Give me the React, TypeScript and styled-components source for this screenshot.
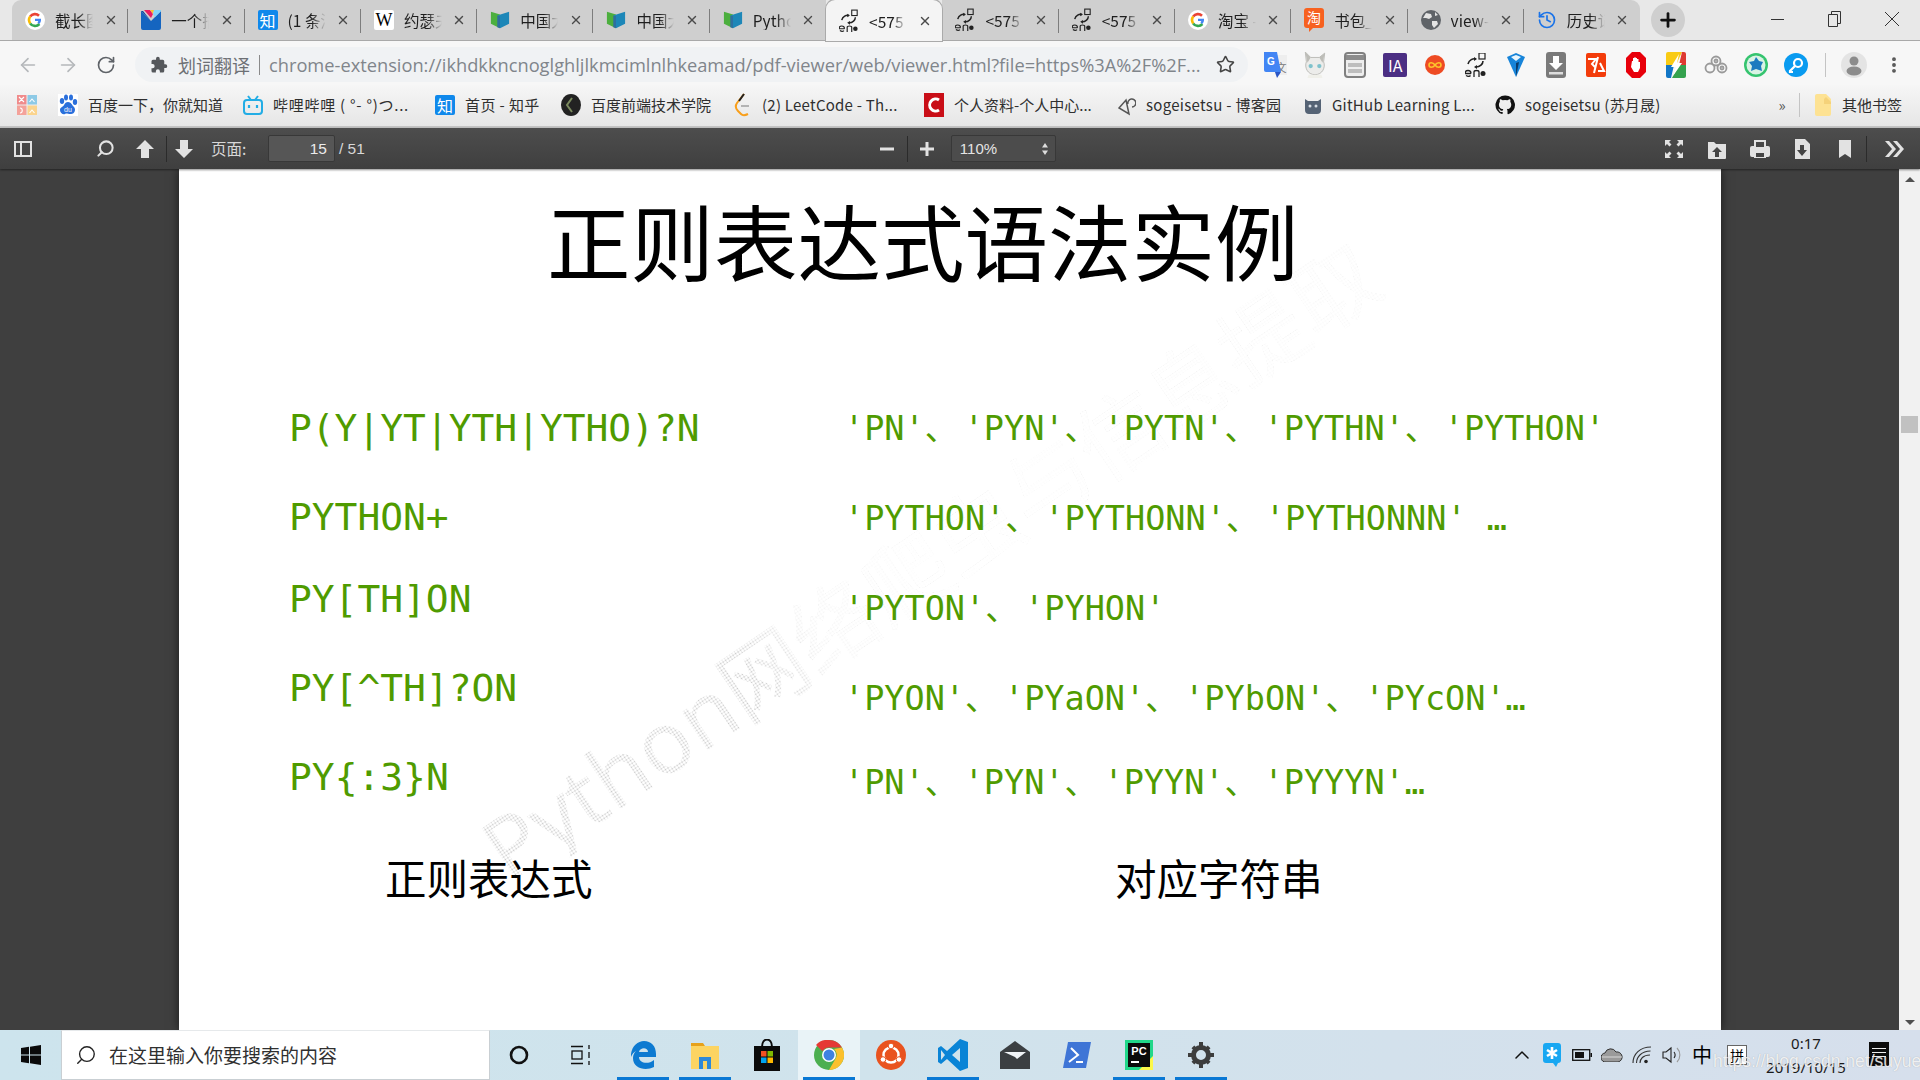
import React from "react";
import styled, { createGlobalStyle } from "styled-components";
import { ArrowLeft, ArrowRight, RotateCw, Star, X, Plus, History, Search, ChevronUp, MoreVertical } from "lucide-react";

const Global = createGlobalStyle`
  html, body { margin: 0; padding: 0; width: 1920px; height: 1080px; overflow: hidden; }
  body { font-family: "Noto Sans CJK SC", "Noto Sans", sans-serif; }
  * { box-sizing: border-box; }
`;

const Root = styled.div`
  width: 1920px; height: 1080px; display: flex; flex-direction: column; overflow: hidden; background: #404040;
`;

/* ---------- tab strip ---------- */
const TabStrip = styled.div`
  height: 41px; flex: none; display: flex; align-items: stretch; padding-left: 12px;
  background: #e8e8e8; border-bottom: 1px solid #a9a9a9;
`;
const Tab = styled.div<{ $active?: boolean; $last?: boolean }>`
  width: 116.3px; flex: none; display: flex; align-items: center; padding: 0 0 0 13px; position: relative;
  height: ${p => (p.$active ? "41px" : "40px")};
  background: ${p => (p.$active ? "#f4f4f4" : "#cfcfcf")};
  border-radius: ${p => (p.$active ? "9px 9px 0 0" : "0")};
  box-shadow: ${p => (p.$active ? "0 0 0 1px #aaa" : "none")};
  z-index: ${p => (p.$active ? 2 : 1)};
  &:first-child { border-top-left-radius: 9px; }
  ${p => p.$last && "border-top-right-radius: 9px;"}
  &::after {
    content: ""; position: absolute; right: 0; top: 9px; bottom: 7px; width: 1px;
    background: ${p => (p.$active || p.$last ? "transparent" : "#7d7d7d")};
  }
`;
const TabIconSlot = styled.span`
  width: 20px; height: 20px; flex: none; display: flex; align-items: center; justify-content: center;
`;
const TabTitle = styled.span`
  margin-left: 10px; width: 38px; flex: none; overflow: hidden; white-space: nowrap; font-size: 15.5px; line-height: 20px; color: #1e1e1e;
  -webkit-mask-image: linear-gradient(90deg, #000 62%, transparent 100%);
  mask-image: linear-gradient(90deg, #000 62%, transparent 100%);
`;
const TabClose = styled.span`
  margin-left: 10.5px; display: flex; color: #4a4a4a;
`;
const NewTab = styled.span`
  width: 34px; height: 34px; border-radius: 50%; background: #cfcfcf; margin: 3px 0 0 11px;
  display: flex; align-items: center; justify-content: center; color: #111;
`;
const WindowControls = styled.div`
  margin-left: auto; display: flex; color: #333; height: 38px;
`;
const WinButton = styled.span`
  width: 57px; display: flex; align-items: center; justify-content: center;
`;

/* ---------- address toolbar ---------- */
const Toolbar = styled.div`
  height: 44px; flex: none; display: flex; align-items: center; background: #f7f7f7; padding-top: 3px;
`;
const NavSlot = styled.span<{ $w: number; $c?: string }>`
  width: ${p => p.$w}px; flex: none; display: flex; justify-content: center; align-items: center; color: ${p => p.$c || "#5f6368"};
`;
const Omnibox = styled.div`
  width: 1113px; height: 35px; margin-left: 3px; border-radius: 18px; background: #f0f2f4; display: flex; align-items: center; padding-left: 15px; flex: none;
`;
const OmniLabel = styled.span`
  margin-left: 10px; font-size: 18px; color: #6d7074; white-space: nowrap;
`;
const OmniDivider = styled.span`
  width: 1px; height: 20px; background: #8a8a8a; margin: 0 9px 0 9px;
`;
const OmniUrl = styled.span`
  font-family: "Open Sans", "Noto Sans", sans-serif; font-size: 18.25px; color: #80858b; white-space: nowrap;
`;
const OmniStar = styled.span`
  margin-left: auto; margin-right: 13px; display: flex; color: #444;
`;
const Extensions = styled.div`
  display: flex; align-items: center; margin-left: 7px;
`;
const ExtSlot = styled.span`
  width: 40.1px; height: 30px; flex: none; display: flex; align-items: center; justify-content: center;
`;
const ExtDivider = styled.span`
  width: 1px; height: 24px; flex: none; background: #c4c4c4; margin-left: 9px;
`;
const VSep = styled.span<{ $h?: number; $c?: string }>`
  width: 1px; height: ${p => p.$h || 22}px; flex: none; background: ${p => p.$c || "#c4c4c4"};
`;

/* ---------- bookmarks ---------- */
const Bookmarks = styled.div`
  height: 43px; flex: none; display: flex; align-items: center; padding: 0 0 1px 17px;
  background: linear-gradient(#f6f6f6, #e6e6e6); border-bottom: 2px solid #c3c3c3;
`;
const Bookmark = styled.div<{ $w: number }>`
  width: ${p => p.$w}px; flex: none; display: flex; align-items: center; gap: 10px; white-space: nowrap; overflow: hidden;
`;
const BookmarkText = styled.span<{ $ls?: number }>`
  font-size: 15px; color: #2f2f2f; line-height: 22px; white-space: nowrap; letter-spacing: ${p => p.$ls || 0}px;
`;
const MoreMarks = styled.span`
  margin-left: auto; margin-right: 7px; width: 20px; text-align: center; font-size: 15px; color: #555; line-height: 18px;
`;
const OtherMarks = styled.div`
  display: flex; align-items: center; gap: 11px; margin: 0 18px 0 15px;
`;

/* ---------- pdf toolbar ---------- */
const PdfBar = styled.div`
  height: 41px; flex: none; display: flex; align-items: center; color: #dcdcdc;
  background: linear-gradient(#4d4d4d, #3f3f3f); box-shadow: 0 1px 2px rgba(0,0,0,.45); position: relative; z-index: 3;
`;
const PdfSlot = styled.span<{ $w: number; $ml?: number }>`
  width: ${p => p.$w}px; margin-left: ${p => p.$ml || 0}px; height: 32px; flex: none; display: flex; align-items: center; justify-content: center;
`;
const PdfLabel = styled.span`
  font-size: 15.5px; margin-left: 10px; width: 57px; white-space: nowrap; color: #d8d8d8; padding-bottom: 1px;
`;
const PageInput = styled.span`
  width: 67px; height: 27px; flex: none; border-radius: 2px; background: #565656; border: 1px solid #383838; display: flex; align-items: center; justify-content: flex-end;
  padding-right: 7px; font-family: "Liberation Sans", sans-serif; font-size: 15.5px; color: #ececec;
`;
const PageCount = styled.span`
  margin-left: 4px; font-family: "Liberation Sans", sans-serif; font-size: 15.5px; color: #d8d8d8; white-space: nowrap;
`;
const ZoomSelect = styled.span`
  width: 105px; height: 27px; margin-left: 4px; flex: none; border-radius: 2px; background: #4c4c4c; border: 1px solid #383838; display: flex; align-items: center;
  justify-content: space-between; padding: 0 6px 0 8px; font-family: "Liberation Sans", sans-serif; font-size: 15px; color: #e4e4e4;
`;
const PdfRight = styled.div`
  margin-left: auto; display: flex; align-items: center;
`;

/* ---------- viewer ---------- */
const Viewer = styled.div`
  flex: 1; min-height: 0; display: flex; background: #3f3f3f; overflow: hidden;
`;
const Page = styled.div`
  width: 1542px; margin-left: 179px; flex: none; height: 100%; background: #fff; position: relative; overflow: hidden; padding-top: 28px;
  box-shadow: 0 0 10px rgba(0,0,0,.6);
`;
const Watermark = styled.div`
  position: absolute; left: 337px; top: 635px; transform-origin: left bottom; transform: rotate(-34deg); white-space: nowrap; font-family: "Noto Sans", "Noto Sans CJK SC", sans-serif;
  font-size: 86px; line-height: 90px; color: transparent;
  background-image:
    linear-gradient(90deg, rgba(255,255,255,0) 0%, rgba(255,255,255,0) 30%, rgba(255,255,255,.8) 37%, rgba(255,255,255,.97) 50%, rgba(255,255,255,.88) 100%),
    radial-gradient(circle, #c9c9c9 .8px, transparent 1.1px);
  background-size: 100% 100%, 3px 3px;
  -webkit-background-clip: text; background-clip: text;
`;
const SlideTitle = styled.h1`
  margin: 0 0 0 368px; font-size: 83.5px; line-height: 83px; font-weight: 400; color: #000; white-space: nowrap; position: relative;
`;
const Columns = styled.div`
  display: flex; padding: 126px 0 0 110px; position: relative;
`;
const LeftCol = styled.div`
  width: 555px; flex: none; display: flex; flex-direction: column;
`;
const RightCol = styled.div`
  flex: 1; display: flex; flex-direction: column; padding-top: 1px;
`;
const Row = styled.div<{ $h: number; $mt?: number }>`
  height: ${p => p.$h}px; margin-top: ${p => p.$mt || 0}px; display: flex; align-items: center; white-space: pre;
`;
const Regex = styled.span`
  font-family: "DejaVu Sans Mono", monospace; font-size: 37.9px; line-height: 44px; color: #4f9b00;
`;
const Sample = styled.span`
  font-family: "DejaVu Sans Mono", monospace; font-size: 33.5px; line-height: 40px; color: #4f9b00;
`;
const Comma = styled.span`
  display: inline-block; width: 39px; font-size: 33px; font-family: "Noto Sans CJK SC", sans-serif;
`;
const Captions = styled.div`
  display: flex; position: relative; padding: 48px 0 0 206px;
`;
const Caption = styled.span<{ $w?: number }>`
  font-size: 41.5px; line-height: 56px; color: #000; white-space: nowrap; width: ${p => (p.$w ? p.$w + "px" : "auto")};
`;
const Scrollbar = styled.div`
  width: 21px; margin-left: 178px; flex: none; background: #f1f1f1; display: flex; flex-direction: column; align-items: center; padding-top: 8px; position: relative;
`;
const ScrollArrow = styled.span<{ $down?: boolean }>`
  width: 0; height: 0; border-left: 5px solid transparent; border-right: 5px solid transparent;
  ${p => (p.$down ? "border-top: 5px solid #505050; margin-top: auto; margin-bottom: 5px;" : "border-bottom: 5px solid #505050;")}
`;
const ScrollThumb = styled.span`
  width: 17px; height: 17px; background: #c1c1c1; margin-top: 234px;
`;

/* ---------- taskbar ---------- */
const Taskbar = styled.div`
  height: 50px; flex: none; display: flex; align-items: stretch; background: linear-gradient(90deg, #cde4ed 0%, #d0e3ec 45%, #d6dfec 100%); position: relative;
`;
const StartBtn = styled.span`
  width: 61px; flex: none; display: flex; align-items: center; justify-content: center;
`;
const SearchBox = styled.div`
  width: 429px; flex: none; background: #fff; border: 1px solid #c9cfd3; border-top-color: #e6e9eb; display: flex; align-items: center; padding: 0 0 1px 13px;
`;
const SearchText = styled.span`
  margin-left: 12px; font-size: 19px; color: #303030; white-space: nowrap;
`;
const TaskItems = styled.div`
  display: flex; margin-left: -2px;
`;
const TaskItem = styled.span<{ $on?: boolean; $open?: boolean }>`
  width: 62px; flex: none; display: flex; align-items: center; justify-content: center; position: relative; padding-bottom: 1px;
  background: ${p => (p.$on ? "#e9f3f7" : "transparent")};
  &::after {
    content: ""; position: absolute; left: 5px; right: 5px; bottom: 0; height: 3px; background: ${p => (p.$open ? "#0a78d4" : "transparent")};
  }
`;
const Tray = styled.div`
  margin-left: auto; display: flex; align-items: center; padding-right: 21px; height: 100%;
`;
const TraySlot = styled.span<{ $w: number }>`
  width: ${p => p.$w}px; flex: none; display: flex; align-items: center; justify-content: center; color: #111;
`;
const ImeZh = styled.span`
  font-size: 20px; color: #000; line-height: 24px;
`;
const ImeBox = styled.span`
  width: 20px; height: 20px; background: #fff; border: 1px solid #666; font-size: 14px; line-height: 18px; text-align: center; color: #000;
`;
const Clock = styled.div`
  width: 98px; flex: none; display: flex; flex-direction: column; align-items: center; font-family: "Noto Sans", sans-serif; font-size: 15px; line-height: 24px; color: #1a1a1a;
`;
const Notice = styled.span`
  width: 20px; height: 24px; background: #0c0c0c; display: flex; flex-direction: column; gap: 3px; padding: 6px 3px 0; margin-bottom: 2px;
`;
const NoticeLine = styled.i`
  display: block; height: 1px; background: #eee;
`;
const NoticeWrap = styled.span`
  width: 41px; margin-left: 3px; flex: none; display: flex; justify-content: center;
`;
const Stamp = styled.span`
  position: absolute; left: 1713px; top: 19px; font-family: "Liberation Sans", sans-serif; font-size: 17.5px; line-height: 24px; color: rgba(255,255,255,.82); white-space: nowrap;
  text-shadow: 0 0 1px rgba(120,120,120,.55);
`;

/* ---------- small badges ---------- */
const Badge = styled.span<{ $bg: string; $s?: number; $fs?: number; $fg?: string; $serif?: boolean }>`
  width: ${p => p.$s || 20}px; height: ${p => p.$s || 20}px; background: ${p => p.$bg}; border-radius: 2px; color: ${p => p.$fg || "#fff"};
  font-size: ${p => p.$fs || 16}px; line-height: ${p => p.$s || 20}px; text-align: center; flex: none; display: block;
  font-family: ${p => (p.$serif ? '"Liberation Serif", serif' : 'inherit')};
`;

/* ---------- icons ---------- */
const GoogleIcon = () => (
  <svg width="20" height="20" viewBox="0 0 20 20">
    <circle cx="10" cy="10" r="10" fill="#fff" />
    <path d="M5.2 6.6A5.9 5.9 0 0 1 14 5.7" fill="none" stroke="#ea4335" strokeWidth="2.6" />
    <path d="M5.2 6.6a5.9 5.9 0 0 0 0 6.8" fill="none" stroke="#fbbc05" strokeWidth="2.6" />
    <path d="M5.2 13.4a5.9 5.9 0 0 0 9.2.6" fill="none" stroke="#34a853" strokeWidth="2.6" />
    <path d="M10 8.8h6v1.4a6 6 0 0 1-1.6 3.9l-2-1.5a3 3 0 0 0 .9-1.6H10z" fill="#4285f4" />
  </svg>
);
const ShieldIcon = () => (
  <svg width="20" height="20" viewBox="0 0 20 20">
    <path d="M0 1l10 10L20 1v17a2 2 0 0 1-2 2H2a2 2 0 0 1-2-2z" fill="#1565c0" />
    <path d="M0 1h2l8 10z" fill="#0d47a1" />
    <path d="M3 0h6l3 4-2 4z" fill="#e91e63" />
    <path d="M9 0h4l-1 4z" fill="#fbc02d" />
    <path d="M13 0h7v1l-6 6-2-3z" fill="#81d4fa" />
  </svg>
);
const MoocIcon = () => (
  <svg width="22" height="22" viewBox="0 0 22 22">
    <path d="M1 2l10 3v15L1 15z" fill="#4caf3e" />
    <path d="M8 6l13-4v13l-10 5V7z" fill="#1d87b8" />
    <path d="M8 6l3 1v13l-3-1z" fill="#2f6f9f" />
  </svg>
);
const EnIcon = () => (
  <svg width="22" height="24" viewBox="0 0 22 24">
    <path d="M3 11c1-4 5-6 8-5" fill="none" stroke="#222" strokeWidth="1.6" />
    <path d="M9 4l3 2-3 2z" fill="#222" />
    <path d="M18 8c0 3-3 6-7 6" fill="none" stroke="#222" strokeWidth="1.6" />
    <path d="M12 12l-3 2 3 2z" fill="#222" />
    <rect x="14" y="0" width="6" height="6" fill="none" stroke="#222" strokeWidth="1.2" />
    <path d="M0 20.5h6M0 20.5c0-4 6-4 6 0M1 22.5c1.5 1 3.500 1 4.500 0M9 24v-5c0-2 5-2 5 0v5" fill="none" stroke="#222" strokeWidth="1.3" />
    <circle cx="18" cy="20.500" r="2.500" fill="#222" />
  </svg>
);
const TaoIcon = () => (
  <svg width="20" height="24" viewBox="0 0 20 24">
    <path d="M3 0h14a3 3 0 0 1 3 3v14a3 3 0 0 1-3 3H9l-4 4v-4H3a3 3 0 0 1-3-3V3a3 3 0 0 1 3-3z" fill="#f7611f" />
    <text x="10" y="15" textAnchor="middle" fontSize="14" fill="#fff" fontFamily="Noto Sans CJK SC">淘</text>
  </svg>
);
const GlobeIcon = () => (
  <svg width="20" height="20" viewBox="0 0 20 20">
    <circle cx="10" cy="10" r="10" fill="#5f6368" />
    <path d="M5 3l5 1 1 3-3 2-3-1-3 0zM11 11l5 0 1 3-4 4-2-3zM14 2l3 3-3 1z" fill="#e4e4e4" />
  </svg>
);
const TranslateIcon = () => (
  <svg width="30" height="32" viewBox="0 0 30 32">
    <path d="M12 6h15v20H15z" fill="#eee" />
    <text x="21" y="23" textAnchor="middle" fontSize="11" fill="#777" fontFamily="Noto Sans CJK SC">文</text>
    <path d="M4 3h13l4 20H6a2 2 0 0 1-2-2z" fill="#4285f4" />
    <path d="M15 23l2 6 4-6z" fill="#2a56c6" />
    <text x="11" y="16" textAnchor="middle" fontSize="10" fontWeight="700" fill="#fff" fontFamily="Liberation Sans">G</text>
  </svg>
);
const CatIcon = () => (
  <svg width="24" height="28" viewBox="0 0 22 26">
    <path d="M2 1l5 5h8l5-4-1 8c2 5-1 12-8 12S1 15 3 10z" fill="#ececea" stroke="#b5b5b0" strokeWidth=".8" />
    <path d="M5 22l-1 3h14l-1-3z" fill="#f0f0ea" />
    <path d="M2 1l5 5-3 5zM20 2l-5 4 3 5z" fill="#bdbdb8" />
    <circle cx="7" cy="14" r="2" fill="#7fc2cc" />
    <circle cx="15" cy="14" r="2" fill="#7fc2cc" />
  </svg>
);
const ReaderIcon = () => (
  <svg width="22" height="26" viewBox="0 0 22 26">
    <rect x="1" y="1" width="20" height="24" rx="3" fill="#eee" stroke="#808080" strokeWidth="2" />
    <rect x="2" y="3" width="18" height="5" fill="#8c8c8c" />
    <rect x="4" y="11" width="14" height="4" fill="#bdbdbd" />
    <rect x="4" y="17" width="14" height="4" fill="#bdbdbd" />
  </svg>
);
const InfinityIcon = () => (
  <svg width="20" height="20" viewBox="0 0 20 20">
    <circle cx="10" cy="10" r="10" fill="#ee4b23" />
    <path d="M10 10c-2-3-6-3-6 0s4 3 6 0 6-3 6 0-4 3-6 0z" fill="none" stroke="#fdc42c" strokeWidth="1.6" />
  </svg>
);
const VeeIcon = () => (
  <svg width="20" height="26" viewBox="0 0 20 26">
    <path d="M1 5l9-4 9 4-9 20z" fill="#1784d9" />
    <path d="M5 5l5-2 5 2-5 4z" fill="#e8f5fd" />
    <path d="M10 11l3-1-3 15z" fill="#0c3c6b" />
  </svg>
);
const DownloadExt = () => (
  <svg width="20" height="26" viewBox="0 0 20 26">
    <rect width="20" height="26" rx="3" fill="#7a7a7a" />
    <path d="M7 4h6v7h4l-7 7-7-7h4z" fill="#fff" />
    <rect x="3" y="20" width="14" height="2.500" fill="#ddd" />
  </svg>
);
const CodeExt = () => (
  <svg width="20" height="24" viewBox="0 0 20 24">
    <rect width="20" height="24" rx="2" fill="#f33c0b" />
    <path d="M2 6h8l-4 5 3 3M12 4l-4 16M14 10l4 8h-6" fill="none" stroke="#fff" strokeWidth="2" />
  </svg>
);
const StopIcon = () => (
  <svg width="20" height="26" viewBox="0 0 20 26">
    <path d="M6 0h8l6 6v14l-6 6H6l-6-6V6z" fill="#e8000b" />
    <path d="M6 9h1V6h1.500v-1h1v1H11v1h1.500v3H14v6l-2 4H8l-3-5z" fill="#fff" />
  </svg>
);
const BoltIcon = () => (
  <svg width="20" height="26" viewBox="0 0 20 26">
    <path d="M2 0h14L10 13H0V2a2 2 0 0 1 2-2z" fill="#f9cb14" />
    <path d="M16 0h2a2 2 0 0 1 2 2v11h-7z" fill="#de3a31" />
    <path d="M0 13h8l-3 13H2a2 2 0 0 1-2-2z" fill="#1276c6" />
    <path d="M13 13h7v11a2 2 0 0 1-2 2H6z" fill="#34a24e" />
    <path d="M13 2L5 15h5l-3 9 9-13h-5z" fill="#fff" />
  </svg>
);
const RingsIcon = () => (
  <svg width="24" height="20" viewBox="0 0 24 20" fill="none" stroke="#9a9a9a" strokeWidth="1.800">
    <circle cx="6" cy="13" r="4.500" />
    <circle cx="12" cy="6" r="4.500" />
    <circle cx="18" cy="13" r="4.500" />
    <circle cx="12" cy="6" r="1.500" />
    <circle cx="18" cy="13" r="1.500" />
  </svg>
);
const PuzzleBadge = () => (
  <svg width="24" height="24" viewBox="0 0 24 24">
    <circle cx="12" cy="12" r="12" fill="#35c46f" />
    <circle cx="12" cy="12" r="9.500" fill="#d9f3e4" />
    <path d="M12 4l3 4 4 1-2 4 1 5-6-2-5 2 1-5-3-4 5-1z" fill="#1b7bbf" />
  </svg>
);
const KeyBadge = () => (
  <svg width="24" height="24" viewBox="0 0 24 24">
    <circle cx="12" cy="12" r="12" fill="#0a9bf0" />
    <circle cx="14" cy="10" r="4" fill="none" stroke="#fff" strokeWidth="2.200" />
    <path d="M11 13l-5 5v1h3" fill="none" stroke="#fff" strokeWidth="2.200" />
  </svg>
);
const AvatarIcon = () => (
  <svg width="26" height="26" viewBox="0 0 26 26">
    <circle cx="13" cy="13" r="13" fill="#e4e4e4" />
    <circle cx="13" cy="9" r="4.500" fill="#8c8c8c" />
    <ellipse cx="13" cy="19" rx="7.500" ry="4.500" fill="#8c8c8c" />
  </svg>
);
const PuzzleSmall = () => (
  <svg width="18" height="18" viewBox="0 0 24 24" fill="#55585c">
    <path d="M20.500 11H19V7a2 2 0 0 0-2-2h-4V3.500a2.500 2.500 0 0 0-5 0V5H4a2 2 0 0 0-2 2v3.800h1.500a2.700 2.700 0 0 1 0 5.400H2V20a2 2 0 0 0 2 2h3.800v-1.500a2.700 2.700 0 0 1 5.400 0V22H17a2 2 0 0 0 2-2v-4h1.500a2.500 2.500 0 0 0 0-5z" />
  </svg>
);
const TilesIcon = () => (
  <svg width="20" height="20" viewBox="0 0 20 20">
    <rect width="9.500" height="9.500" fill="#f08b8b" />
    <rect x="10.500" width="9.500" height="9.500" fill="#8ecae6" />
    <rect y="10.500" width="9.500" height="9.500" fill="#f4a29a" />
    <rect x="10.500" y="10.500" width="9.500" height="9.500" fill="#fbd48d" />
    <path d="M2 2l5 5M7 2L2 7M12.500 7l2.500-3 2.500 3M3 13c3 0 3 5 0 5M12.500 18l2.500-3 2.500 3" fill="none" stroke="#fff" strokeWidth="1.100" />
  </svg>
);
const BaiduIcon = () => (
  <svg width="20" height="22" viewBox="0 0 20 22" fill="#2a6fdb">
    <rect width="20" height="22" fill="#fff" />
    <ellipse cx="4" cy="7" rx="2.200" ry="3" />
    <ellipse cx="8" cy="3.500" rx="2" ry="3" />
    <ellipse cx="13" cy="3.500" rx="2" ry="3" />
    <ellipse cx="17" cy="8" rx="2.200" ry="3" />
    <path d="M10 8c3 0 4 3 6 5s1 7-3 7-4-1-6 0-5-1-5-4 3-3 4-5 2-3 4-3z" />
    <text x="10" y="18" textAnchor="middle" fontSize="7" fill="#fff" fontFamily="Liberation Sans">du</text>
  </svg>
);
const BiliIcon = () => (
  <svg width="20" height="20" viewBox="0 0 20 20" fill="none" stroke="#23ade5" strokeWidth="2">
    <rect x="1" y="5" width="18" height="14" rx="3" />
    <path d="M5 1l3 4M15 1l-3 4" />
    <path d="M6 10v3M14 10v3" strokeWidth="2.200" />
  </svg>
);
const DarkCircle = () => (
  <svg width="20" height="22" viewBox="0 0 20 22">
    <ellipse cx="10" cy="11" rx="10" ry="11" fill="#222" />
    <path d="M11 4L6 11l5 7" fill="none" stroke="#7b8a5e" strokeWidth="2" />
  </svg>
);
const LeetIcon = () => (
  <svg width="20" height="24" viewBox="0 0 14 24" fill="none" strokeWidth="2">
    <path d="M9 1L2 10c-2 3-1 6 1 8l3 3c2 2 5 1 7 0" stroke="#f89f1b" />
    <path d="M6 13h8" stroke="#b3b3b3" />
    <path d="M9 1L4 8" stroke="#222" />
  </svg>
);
const CsdnIcon = () => (
  <svg width="20" height="24" viewBox="0 0 20 24">
    <rect width="20" height="24" fill="#c90e17" />
    <path d="M15 7a6 6 0 1 0 0 10" fill="none" stroke="#fff" strokeWidth="3" />
  </svg>
);
const CnblogsIcon = () => (
  <svg width="18" height="22" viewBox="0 0 18 22" fill="none" stroke="#555" strokeWidth="1.500">
    <path d="M1 14l7-8 3 14zM10 10a4 4 0 1 1 4 3" />
  </svg>
);
const LearnIcon = () => (
  <svg width="18" height="20" viewBox="0 0 18 20">
    <path d="M1 4l3 2h10l3-2v11a4 4 0 0 1-4 4H5a4 4 0 0 1-4-4z" fill="#556375" />
    <circle cx="6" cy="11" r="1.500" fill="#d8dee6" />
    <circle cx="12" cy="11" r="1.500" fill="#d8dee6" />
  </svg>
);
const GithubIcon = () => (
  <svg width="20" height="22" viewBox="0 0 24 24" fill="#111">
    <path d="M12 .5a11.500 11.500 0 0 0-3.600 22.400c.6.1.8-.3.8-.6v-2c-3.200.7-3.900-1.500-3.900-1.500-.5-1.300-1.300-1.700-1.300-1.700-1-.7.1-.7.1-.7 1.200.1 1.800 1.200 1.800 1.200 1 1.800 2.700 1.300 3.400 1 .1-.8.400-1.300.7-1.600-2.600-.3-5.300-1.300-5.300-5.700 0-1.300.5-2.300 1.200-3.100-.1-.3-.5-1.500.1-3.100 0 0 1-.3 3.200 1.200a11 11 0 0 1 5.800 0c2.200-1.500 3.200-1.200 3.200-1.200.6 1.600.2 2.800.1 3.100.7.8 1.200 1.800 1.200 3.100 0 4.400-2.700 5.400-5.300 5.700.4.400.8 1.100.8 2.200v3.200c0 .3.200.7.800.6A11.500 11.500 0 0 0 12 .5z" />
  </svg>
);
const FolderIcon = () => (
  <svg width="16" height="22" viewBox="0 0 16 22">
    <path d="M2 0h9l5 5v15a2 2 0 0 1-2 2H2a2 2 0 0 1-2-2V2a2 2 0 0 1 2-2z" fill="#fde293" />
    <path d="M11 3l5 5v2H9V5z" fill="#f5d27a" />
  </svg>
);

const PdfIcon = ({ children, w = 20, h = 20 }: { children: React.ReactNode; w?: number; h?: number }) => (
  <svg width={w} height={h} viewBox={`0 0 ${w} ${h}`} fill="#e2e2e2">{children}</svg>
);

const WinLogo = () => (
  <svg width="20" height="20" viewBox="0 0 20 20" fill="#0a0a0a">
    <path d="M0 3l8-1.200V9.500H0zM9 1.700L20 0v9.500H9zM0 10.500h8v7.700L0 17zM9 10.500h11V20L9 18.300z" />
  </svg>
);
const TaskViewIcon = () => (
  <svg width="20" height="20" viewBox="0 0 20 20" fill="none" stroke="#111" strokeWidth="1.300">
    <path d="M0 1.500h12M0 18.500h12M18 0v4M18 7v6M18 16v4" />
    <rect x="1" y="6" width="10" height="8" />
  </svg>
);
const EdgeIcon = () => (
  <svg width="26" height="28" viewBox="0 0 26 28">
    <path d="M1 13C2 5 8 0 14 0c7 0 12 5 12 13v3H9c0 6 9 8 15 3v7c-8 4-21 2-21-9 0-3 1-5 3-7-2 1-4 3-5 6zM9 11h9c0-5-8-5-9 0z" fill="#0d7ad1" />
  </svg>
);
const ExplorerIcon = () => (
  <svg width="28" height="28" viewBox="0 0 28 28">
    <path d="M0 2h12l2 3H0z" fill="#e6a11b" />
    <path d="M0 5h28v23H0z" fill="#fcd462" />
    <path d="M8 28V16h12v12h-4v-8h-4v8z" fill="#2e89d9" />
  </svg>
);
const StoreIcon = () => (
  <svg width="26" height="32" viewBox="0 0 26 32">
    <path d="M0 7h26v25H0z" fill="#0b0b0b" />
    <path d="M8 8c0-10 10-10 10 0" fill="none" stroke="#0b0b0b" strokeWidth="2" />
    <path d="M7 12h5.500v5.500H7z" fill="#f25022" />
    <path d="M13.500 12H19v5.500h-5.500z" fill="#7fba00" />
    <path d="M7 18.500h5.500V24H7z" fill="#00a4ef" />
    <path d="M13.500 18.500H19V24h-5.500z" fill="#ffb900" />
  </svg>
);
const ChromeIcon = () => (
  <svg width="30" height="30" viewBox="0 0 30 30">
    <circle cx="15" cy="15" r="15" fill="#4caf50" />
    <path d="M15 0a15 15 0 0 1 13 7.500H15a7.500 7.500 0 0 0-6.500 3.800L2 5A15 15 0 0 1 15 0z" fill="#e53935" />
    <path d="M28 7.500A15 15 0 0 1 15 30l6.500-11.300A7.500 7.500 0 0 0 20 9z" fill="#fbc02d" />
    <circle cx="15" cy="15" r="7" fill="#fff" />
    <circle cx="15" cy="15" r="5.500" fill="#3f82e0" />
  </svg>
);
const UbuntuIcon = () => (
  <svg width="30" height="30" viewBox="0 0 30 30">
    <circle cx="15" cy="15" r="15" fill="#e9531f" />
    <circle cx="15" cy="15" r="7.500" fill="none" stroke="#fff" strokeWidth="2.500" />
    <circle cx="15" cy="6" r="2.800" fill="#fff" stroke="#e9531f" />
    <circle cx="7" cy="19.500" r="2.800" fill="#fff" stroke="#e9531f" />
    <circle cx="23" cy="19.500" r="2.800" fill="#fff" stroke="#e9531f" />
  </svg>
);
const VsCodeIcon = () => (
  <svg width="30" height="32" viewBox="0 0 30 32">
    <path d="M22 0l8 3v26l-8 3-13-12-6 5-3-2v-14l3-2 6 5z" fill="#0a84d6" />
    <path d="M22 9l-8 7 8 7z" fill="#d0e3ec" />
    <path d="M3 11v10l4-5z" fill="#d0e3ec" />
  </svg>
);
const MailIcon = () => (
  <svg width="30" height="28" viewBox="0 0 30 28">
    <path d="M15 0l15 11v17H0V11z" fill="#3b3f42" />
    <path d="M4 11h22l-9 7-2-2z" fill="#f0f4f7" />
  </svg>
);
const PsIcon = () => (
  <svg width="28" height="28" viewBox="0 0 28 28">
    <path d="M5 1h23l-5 26H0z" fill="#3f75d6" />
    <path d="M8 7l7 7-9 7" fill="none" stroke="#fff" strokeWidth="2" />
    <path d="M13 21h7" stroke="#fff" strokeWidth="2" />
  </svg>
);
const PyCharmIcon = () => (
  <svg width="28" height="30" viewBox="0 0 28 30">
    <rect width="28" height="30" fill="#21d789" />
    <path d="M14 30l14-14v14z" fill="#fcf84a" />
    <rect x="3" y="3" width="22" height="24" fill="#0b0b0b" />
    <text x="14" y="15" textAnchor="middle" fontSize="11" fontWeight="700" fill="#fff" fontFamily="Liberation Sans">PC</text>
    <rect x="6" y="21" width="8" height="2" fill="#fff" />
  </svg>
);
const GearIcon = () => (
  <svg width="26" height="26" viewBox="0 0 26 26">
    <circle cx="13" cy="13" r="7.500" fill="none" stroke="#3d3d3d" strokeWidth="5" />
    <path d="M11 0h4v4h-4zM11 22h4v4h-4zM0 11h4v4H0zM22 11h4v4h-4zM3.500 6.300L6.300 3.500l2.800 2.800-2.800 2.800zM19.700 22.500l2.800-2.800-2.800-2.800-2.800 2.800zM3.500 19.700l2.800 2.800 2.800-2.800-2.800-2.800zM19.700 3.500l2.800 2.800-2.800 2.800-2.800-2.800z" fill="#3d3d3d" />
  </svg>
);
const BlueBubble = () => (
  <svg width="18" height="24" viewBox="0 0 18 24">
    <path d="M3 0h12a3 3 0 0 1 3 3v14a3 3 0 0 1-3 3l-2 4-3-4H3a3 3 0 0 1-3-3V3a3 3 0 0 1 3-3z" fill="#18a7f2" />
    <path d="M9 4v12M4 7l10 6M14 7L4 13" stroke="#fff" strokeWidth="2.600" />
  </svg>
);
const BatteryIcon = () => (
  <svg width="20" height="12" viewBox="0 0 20 12">
    <rect x=".7" y=".7" width="17" height="10.600" fill="none" stroke="#111" strokeWidth="1.300" />
    <rect x="3" y="3" width="9" height="6" fill="#111" />
    <rect x="18.500" y="4" width="1.500" height="4" fill="#111" />
  </svg>
);
const CloudIcon = () => (
  <svg width="22" height="14" viewBox="0 0 22 14">
    <path d="M5 14a4.500 4.500 0 0 1-1-9 6 6 0 0 1 11-1 5 5 0 0 1 2 10z" fill="#9a9a9a" stroke="#333" />
    <path d="M1 9h20" stroke="#d8d8d8" strokeWidth="1" />
  </svg>
);
const WifiIcon = () => (
  <svg width="20" height="18" viewBox="0 0 20 18" fill="none" stroke="#333" strokeWidth="1.100">
    <path d="M1 17C1 8 8 1 19 1M4.500 17c0-6 5-12 14-12M8 17c0-4 3-8 10-8" />
    <circle cx="14" cy="15.500" r="1.800" fill="#222" stroke="none" />
  </svg>
);
const VolumeIcon = () => (
  <svg width="20" height="18" viewBox="0 0 20 18" fill="none" stroke="#222" strokeWidth="1.100">
    <path d="M1 6h3l5-4v14l-5-4H1z" />
    <path d="M12 6a5 5 0 0 1 0 6" />
    <path d="M15 2a10 10 0 0 1 0 14" stroke="#999" />
  </svg>
);

const tabs: { icon: React.ReactNode; title: string; active?: boolean }[] = [
  { icon: <GoogleIcon />, title: "截长图工具" },
  { icon: <ShieldIcon />, title: "一个插件" },
  { icon: <Badge $bg="#0f88eb">知</Badge>, title: "(1 条消息)" },
  { icon: <Badge $bg="#fff" $fg="#000" $serif $fs={18}>W</Badge>, title: "约瑟夫" },
  { icon: <MoocIcon />, title: "中国大学" },
  { icon: <MoocIcon />, title: "中国大学" },
  { icon: <MoocIcon />, title: "Python" },
  { icon: <EnIcon />, title: "<575", active: true },
  { icon: <EnIcon />, title: "<575" },
  { icon: <EnIcon />, title: "<575" },
  { icon: <GoogleIcon />, title: "淘宝 -" },
  { icon: <TaoIcon />, title: "书包_" },
  { icon: <GlobeIcon />, title: "view-" },
  { icon: <History size={20} color="#1a73e8" />, title: "历史记" },
];

const exts: React.ReactNode[] = [
  <TranslateIcon />, <CatIcon />, <ReaderIcon />, <Badge $bg="#4b2e83" $s={24} $fs={16}>IA</Badge>, <InfinityIcon />, <EnIcon />, <VeeIcon />,
  <DownloadExt />, <CodeExt />, <StopIcon />, <BoltIcon />, <RingsIcon />, <PuzzleBadge />, <KeyBadge />,
];

const marks: { icon: React.ReactNode; text: string; w: number; ls?: number }[] = [
  { icon: <TilesIcon />, text: "", w: 41 },
  { icon: <BaiduIcon />, text: "百度一下，你就知道", w: 185 },
  { icon: <BiliIcon />, text: "哔哩哔哩 ( °- °)つ...", w: 192, ls: 0.75 },
  { icon: <Badge $bg="#0f88eb">知</Badge>, text: "首页 - 知乎", w: 126, ls: 0.4 },
  { icon: <DarkCircle />, text: "百度前端技术学院", w: 171 },
  { icon: <LeetIcon />, text: "(2) LeetCode - Th...", w: 192, ls: 0.25 },
  { icon: <CsdnIcon />, text: "个人资料-个人中心...", w: 194 },
  { icon: <CnblogsIcon />, text: "sogeisetsu - 博客园", w: 186, ls: 0.3 },
  { icon: <LearnIcon />, text: "GitHub Learning L...", w: 191, ls: 0.25 },
  { icon: <GithubIcon />, text: "sogeisetsu (苏月晟)", w: 200, ls: 0.22 },
];

const S = ({ parts, tail }: { parts: string[]; tail?: string }) => (
  <Sample>
    {parts.map((t, i) => (
      <React.Fragment key={i}>
        {t}
        {i < parts.length - 1 && <Comma>、</Comma>}
      </React.Fragment>
    ))}
    {tail}
  </Sample>
);

export default function App() {
  return (
    <Root>
      <Global />
      <TabStrip>
        {tabs.map((t, i) => (
          <Tab key={i} $active={t.active} $last={i === tabs.length - 1}>
            <TabIconSlot>{t.icon}</TabIconSlot>
            <TabTitle>{t.title}</TabTitle>
            <TabClose><X size={14} strokeWidth={2.4} /></TabClose>
          </Tab>
        ))}
        <NewTab><Plus size={22} strokeWidth={3} /></NewTab>
        <WindowControls>
          <WinButton>
            <svg width="13" height="13" viewBox="0 0 13 13"><path d="M0 6.500h13" stroke="#333" /></svg>
          </WinButton>
          <WinButton>
            <svg width="13" height="16" viewBox="0 0 13 16" fill="none" stroke="#333"><path d="M.5 3.500h9v12h-9zM3.500 3.500V.5h9v12h-3" /></svg>
          </WinButton>
          <WinButton>
            <svg width="14" height="14" viewBox="0 0 14 14"><path d="M0 0l14 14M14 0L0 14" stroke="#333" /></svg>
          </WinButton>
        </WindowControls>
      </TabStrip>

      <Toolbar>
        <NavSlot $w={55} $c="#b5b8bb"><ArrowLeft size={22} strokeWidth={1.800} /></NavSlot>
        <NavSlot $w={25} $c="#b5b8bb"><ArrowRight size={22} strokeWidth={1.800} /></NavSlot>
        <NavSlot $w={52}><RotateCw size={20} strokeWidth={2} /></NavSlot>
        <Omnibox>
          <PuzzleSmall />
          <OmniLabel>划词翻译</OmniLabel>
          <OmniDivider />
          <OmniUrl>chrome-extension://ikhdkkncnoglghljlkmcimlnlhkeamad/pdf-viewer/web/viewer.html?file=https%3A%2F%2F...</OmniUrl>
          <OmniStar><Star size={19} strokeWidth={2} /></OmniStar>
        </Omnibox>
        <Extensions>
          {exts.map((e, i) => <ExtSlot key={i}>{e}</ExtSlot>)}
          <ExtDivider />
          <NavSlot $w={55}><AvatarIcon /></NavSlot>
          <NavSlot $w={25}><MoreVertical size={20} color="#555" strokeWidth={2.600} /></NavSlot>
        </Extensions>
      </Toolbar>

      <Bookmarks>
        {marks.map((m, i) => (
          <Bookmark key={i} $w={m.w}>
            {m.icon}
            {m.text && <BookmarkText $ls={m.ls}>{m.text}</BookmarkText>}
          </Bookmark>
        ))}
        <MoreMarks>»</MoreMarks>
        <VSep $h={24} />
        <OtherMarks>
          <FolderIcon />
          <BookmarkText>其他书签</BookmarkText>
        </OtherMarks>
      </Bookmarks>

      <PdfBar>
        <PdfSlot $w={46}>
          <PdfIcon w={18} h={18}><path fillRule="evenodd" d="M0 1h18v16H0zM2 3v12h4V3zM8 3v12h8V3z" /></PdfIcon>
        </PdfSlot>
        <PdfSlot $w={38} $ml={40}>
          <Search size={19} color="#e2e2e2" strokeWidth={2.600} style={{ transform: "scaleX(-1)" }} />
        </PdfSlot>
        <PdfSlot $w={42}>
          <PdfIcon><path d="M10 1l9 9h-5v9H6v-9H1z" /></PdfIcon>
        </PdfSlot>
        <VSep $h={26} $c="#2b2b2b" />
        <PdfSlot $w={34}>
          <PdfIcon><path d="M10 19l9-9h-5V1H6v9H1z" /></PdfIcon>
        </PdfSlot>
        <PdfLabel>页面:</PdfLabel>
        <PageInput>15</PageInput>
        <PageCount>/ 51</PageCount>
        <PdfSlot $w={40} $ml={502}>
          <PdfIcon w={14} h={14}><rect y="5.500" width="14" height="3" /></PdfIcon>
        </PdfSlot>
        <VSep $h={26} $c="#2b2b2b" />
        <PdfSlot $w={39}>
          <PdfIcon w={14} h={14}><path d="M5.500 0h3v5.500H14v3H8.500V14h-3V8.500H0v-3h5.500z" /></PdfIcon>
        </PdfSlot>
        <ZoomSelect>
          110%
          <svg width="8" height="12" viewBox="0 0 8 12" fill="#ddd"><path d="M4 0l3 4.500H1zM4 12L1 7.500h6z" /></svg>
        </ZoomSelect>
        <PdfRight>
          <PdfSlot $w={42}>
            <PdfIcon><path d="M1 1h6L5 3l2.500 2.500-2 2L3 5 1 7zM19 1v6l-2-2-2.500 2.500-2-2L15 3l-2-2zM1 19v-6l2 2 2.500-2.500 2 2L5 17l2 2zM19 19h-6l2-2-2.500-2.500 2-2L17 15l2-2z" /></PdfIcon>
          </PdfSlot>
          <PdfSlot $w={43}>
            <PdfIcon><path fillRule="evenodd" d="M1 3h6l2 2h10v14a1 1 0 0 1-1 1H2a1 1 0 0 1-1-1zM10 8l-5 5h3v5h4v-5h3z" /></PdfIcon>
          </PdfSlot>
          <PdfSlot $w={43}>
            <PdfIcon><path fillRule="evenodd" d="M4 1h12v6h2a2 2 0 0 1 2 2v7a2 2 0 0 1-2 2h-2v1H4v-1H2a2 2 0 0 1-2-2V9a2 2 0 0 1 2-2h2zM6 3v5h8V3zM6 14v4h8v-4z" /></PdfIcon>
          </PdfSlot>
          <PdfSlot $w={42}>
            <PdfIcon><path fillRule="evenodd" d="M3 0h10l5 5v15H3zM8 6v5H5l5 6 5-6h-3V6z" /></PdfIcon>
          </PdfSlot>
          <PdfSlot $w={43}>
            <PdfIcon><path d="M4 1h12v18l-6-4-6 4z" /></PdfIcon>
          </PdfSlot>
          <VSep $h={26} $c="#2b2b2b" />
          <PdfSlot $w={53}>
            <PdfIcon w={22} h={18}><path d="M2 1h4l7 8-7 8H2l7-8zM10 1h4l7 8-7 8h-4l7-8z" /></PdfIcon>
          </PdfSlot>
        </PdfRight>
      </PdfBar>

      <Viewer>
        <Page>
          <Watermark>Python网络爬虫与信息提取</Watermark>
          <SlideTitle>正则表达式语法实例</SlideTitle>
          <Columns>
            <LeftCol>
              <Row $h={44}><Regex>P(Y|YT|YTH|YTHO)?N</Regex></Row>
              <Row $h={44} $mt={45}><Regex>PYTHON+</Regex></Row>
              <Row $h={44} $mt={38}><Regex>PY[TH]ON</Regex></Row>
              <Row $h={44} $mt={45}><Regex>PY[^TH]?ON</Regex></Row>
              <Row $h={44} $mt={45}><Regex>PY{"{:3}"}N</Regex></Row>
            </LeftCol>
            <RightCol>
              <Row $h={40}><S parts={["'PN'", "'PYN'", "'PYTN'", "'PYTHN'", "'PYTHON'"]} /></Row>
              <Row $h={40} $mt={50}><S parts={["'PYTHON'", "'PYTHONN'", "'PYTHONNN'"]} tail=" …" /></Row>
              <Row $h={40} $mt={50}><S parts={["'PYTON'", "'PYHON'"]} /></Row>
              <Row $h={40} $mt={50}><S parts={["'PYON'", "'PYaON'", "'PYbON'", "'PYcON'"]} tail="…" /></Row>
              <Row $h={40} $mt={44}><S parts={["'PN'", "'PYN'", "'PYYN'", "'PYYYN'"]} tail="…" /></Row>
            </RightCol>
          </Columns>
          <Captions>
            <Caption $w={730}>正则表达式</Caption>
            <Caption>对应字符串</Caption>
          </Captions>
        </Page>
        <Scrollbar>
          <ScrollArrow />
          <ScrollThumb />
          <ScrollArrow $down />
        </Scrollbar>
      </Viewer>

      <Taskbar>
        <StartBtn><WinLogo /></StartBtn>
        <SearchBox>
          <Search size={22} color="#222" strokeWidth={1.500} style={{ transform: "scaleX(-1)" }} />
          <SearchText>在这里输入你要搜索的内容</SearchText>
        </SearchBox>
        <TaskItems>
          <TaskItem>
            <svg width="20" height="20" viewBox="0 0 20 20"><circle cx="10" cy="10" r="8" fill="none" stroke="#111" strokeWidth="2.600" /></svg>
          </TaskItem>
          <TaskItem><TaskViewIcon /></TaskItem>
          <TaskItem $open><EdgeIcon /></TaskItem>
          <TaskItem $open><ExplorerIcon /></TaskItem>
          <TaskItem><StoreIcon /></TaskItem>
          <TaskItem $on $open><ChromeIcon /></TaskItem>
          <TaskItem><UbuntuIcon /></TaskItem>
          <TaskItem $open><VsCodeIcon /></TaskItem>
          <TaskItem><MailIcon /></TaskItem>
          <TaskItem><PsIcon /></TaskItem>
          <TaskItem $open><PyCharmIcon /></TaskItem>
          <TaskItem $open><GearIcon /></TaskItem>
        </TaskItems>
        <Tray>
          <TraySlot $w={30}><ChevronUp size={24} strokeWidth={1.500} /></TraySlot>
          <TraySlot $w={30}><BlueBubble /></TraySlot>
          <TraySlot $w={30}><BatteryIcon /></TraySlot>
          <TraySlot $w={30}><CloudIcon /></TraySlot>
          <TraySlot $w={30}><WifiIcon /></TraySlot>
          <TraySlot $w={30}><VolumeIcon /></TraySlot>
          <TraySlot $w={30}><ImeZh>中</ImeZh></TraySlot>
          <TraySlot $w={40}><ImeBox>拼</ImeBox></TraySlot>
          <Clock><span>0:17</span><span>2019/10/15</span></Clock>
          <NoticeWrap>
            <Notice><NoticeLine /><NoticeLine /><NoticeLine /></Notice>
          </NoticeWrap>
        </Tray>
        <Stamp>https://blog.csdn.net/suyues</Stamp>
      </Taskbar>
    </Root>
  );
}
